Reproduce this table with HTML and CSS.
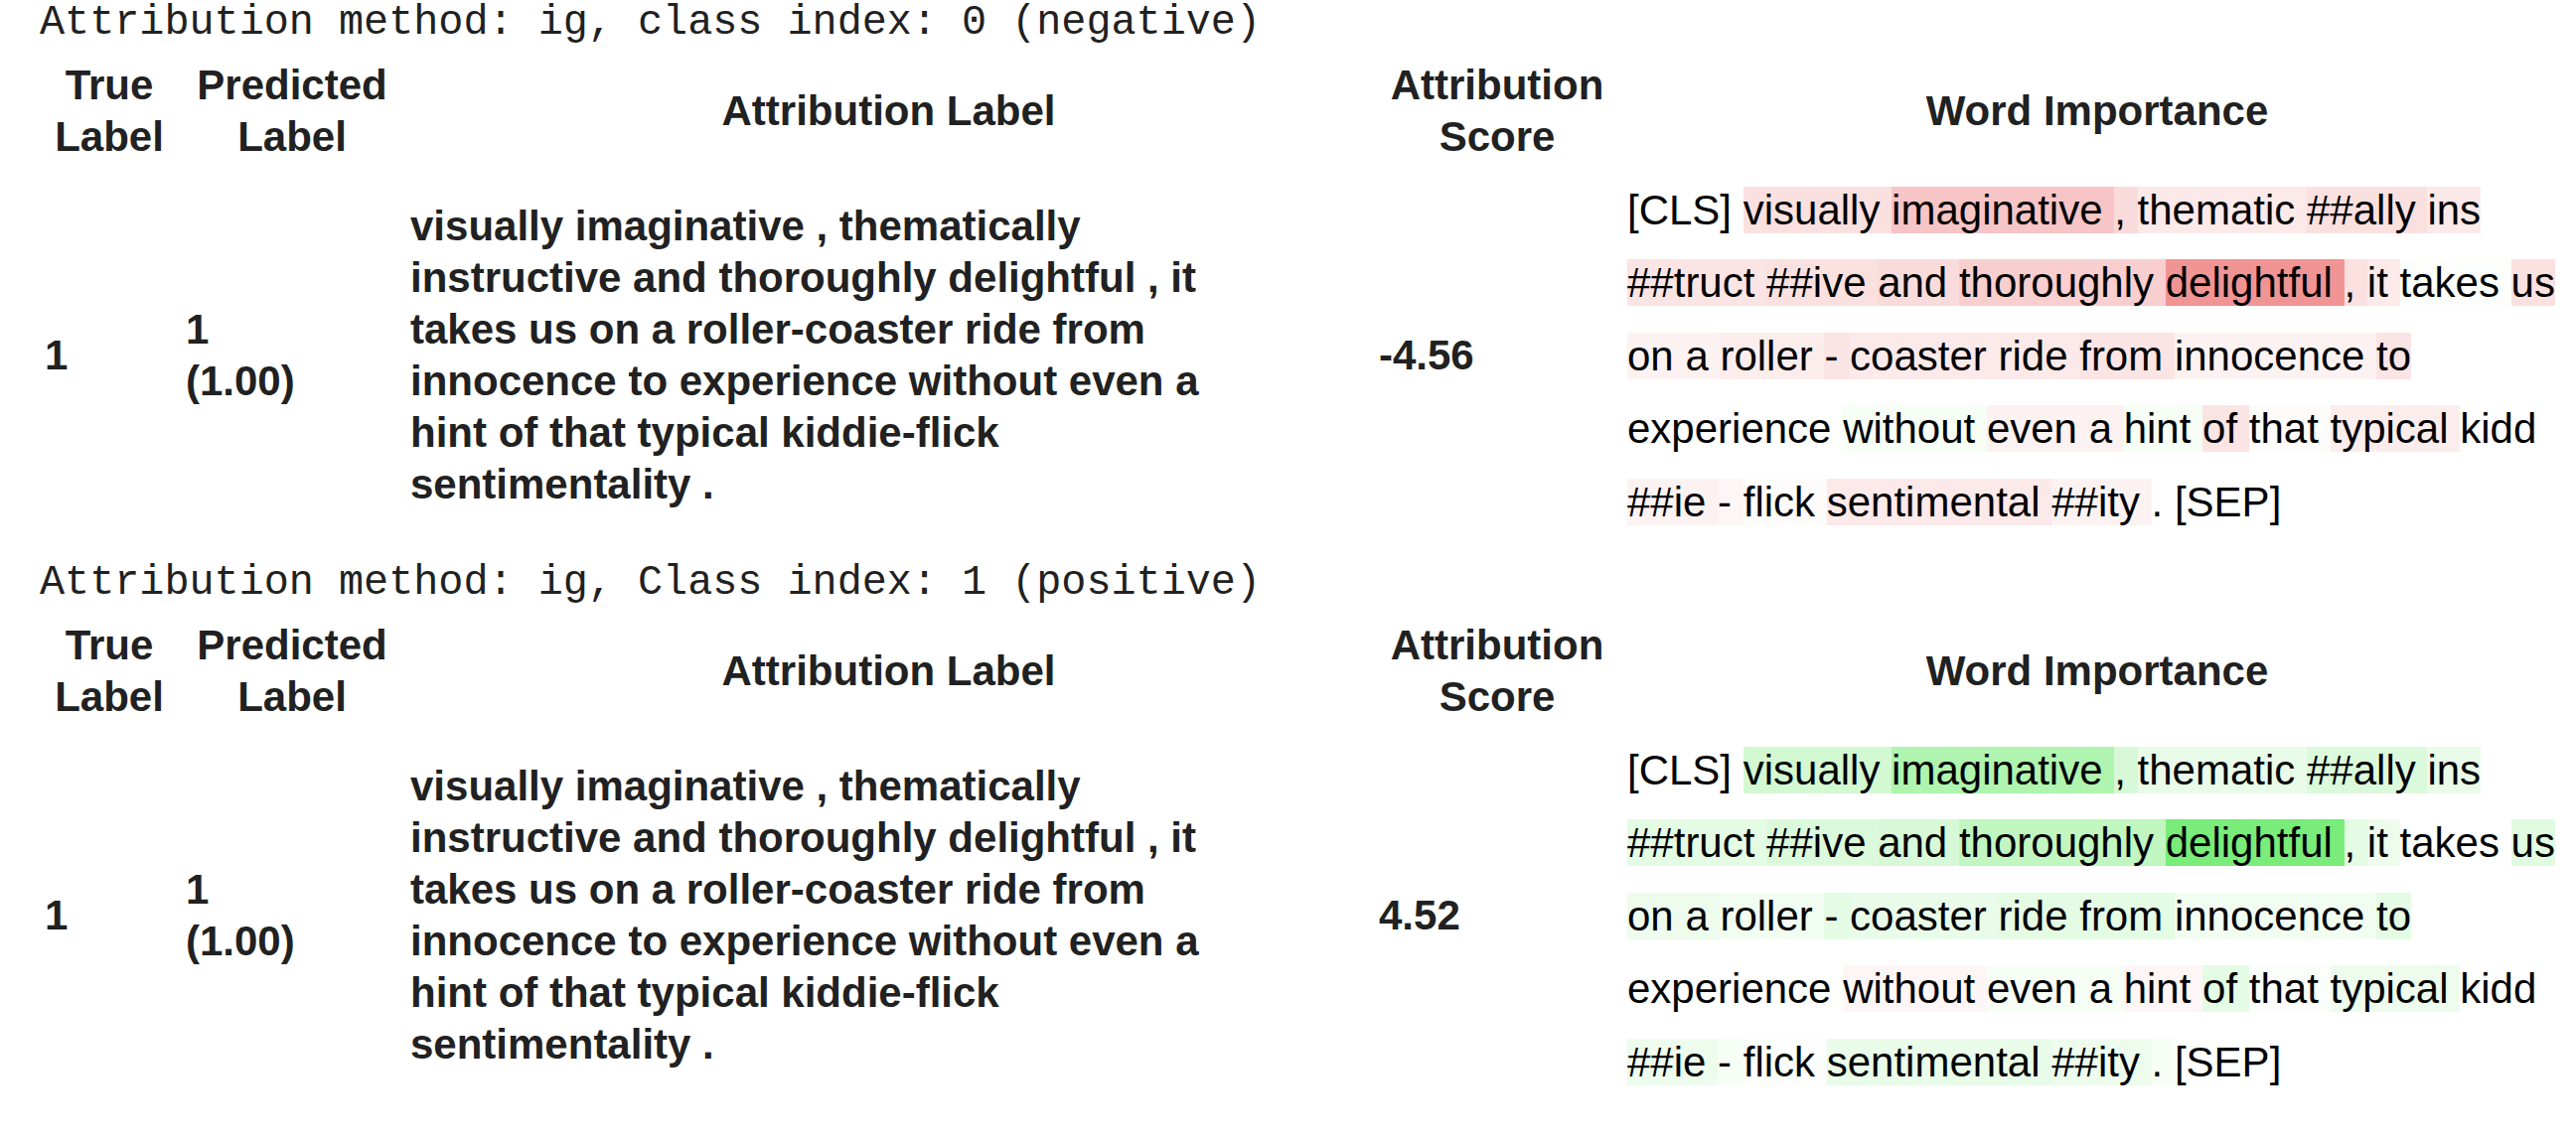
FILE: index.html
```html
<!DOCTYPE html>
<html>
<head>
<meta charset="utf-8">
<title>Attribution visualization</title>
<link rel="stylesheet" href="styles.css">
</head>
<body>
<div class="output">

<section class="block">
<pre class="method">Attribution method: ig, class index: 0 (negative)</pre>
<div class="attr-table">
  <div class="th">True Label</div>
  <div class="th">Predicted Label</div>
  <div class="th">Attribution Label</div>
  <div class="th">Attribution Score</div>
  <div class="th">Word Importance</div>

  <div class="td"><span class="cls">1</span></div>
  <div class="td"><span class="cls">1 (1.00)</span></div>
  <div class="td sentence">visually imaginative , thematically instructive and thoroughly delightful , it takes us on a roller-coaster ride from innocence to experience without even a hint of that typical kiddie-flick sentimentality .</div>
  <div class="td"><span class="cls">-4.56</span></div>
  <div class="words">
<mark class="tok">[CLS] </mark><mark class="tok" style="background-color:hsl(0,75%,93%)">visually </mark><mark class="tok" style="background-color:hsl(0,75%,87%)">imaginative </mark><mark class="tok" style="background-color:hsl(0,75%,92%)">, </mark><mark class="tok" style="background-color:hsl(0,75%,95%)">thematic </mark><mark class="tok" style="background-color:hsl(0,75%,93%)">##ally </mark><mark class="tok" style="background-color:hsl(0,75%,95%)">ins </mark><mark class="tok" style="background-color:hsl(0,75%,94%)">##truct </mark><mark class="tok" style="background-color:hsl(0,75%,93%)">##ive </mark><mark class="tok" style="background-color:hsl(0,75%,92%)">and </mark><mark class="tok" style="background-color:hsl(0,75%,89%)">thoroughly </mark><mark class="tok" style="background-color:hsl(0,75%,76%)">delightful </mark><mark class="tok" style="background-color:hsl(0,75%,93%)">, </mark><mark class="tok" style="background-color:hsl(0,75%,95%)">it </mark><mark class="tok" style="background-color:hsl(120,75%,99%)">takes </mark><mark class="tok" style="background-color:hsl(0,75%,93%)">us </mark><mark class="tok" style="background-color:hsl(0,75%,97%)">on </mark><mark class="tok" style="background-color:hsl(0,75%,97%)">a </mark><mark class="tok" style="background-color:hsl(0,75%,96%)">roller </mark><mark class="tok" style="background-color:hsl(0,75%,94%)">- </mark><mark class="tok" style="background-color:hsl(0,75%,95%)">coaster </mark><mark class="tok" style="background-color:hsl(0,75%,95%)">ride </mark><mark class="tok" style="background-color:hsl(0,75%,94%)">from </mark><mark class="tok" style="background-color:hsl(0,75%,97%)">innocence </mark><mark class="tok" style="background-color:hsl(0,75%,94%)">to </mark><mark class="tok">experience </mark><mark class="tok" style="background-color:hsl(120,75%,98%)">without </mark><mark class="tok" style="background-color:hsl(0,75%,97%)">even </mark><mark class="tok" style="background-color:hsl(0,75%,97%)">a </mark><mark class="tok" style="background-color:hsl(120,75%,98%)">hint </mark><mark class="tok" style="background-color:hsl(0,75%,94%)">of </mark><mark class="tok" style="background-color:hsl(0,75%,99%)">that </mark><mark class="tok" style="background-color:hsl(0,75%,96%)">typical </mark><mark class="tok">kidd </mark><mark class="tok" style="background-color:hsl(0,75%,97%)">##ie </mark><mark class="tok" style="background-color:hsl(0,75%,98%)">- </mark><mark class="tok" style="background-color:hsl(0,75%,99%)">flick </mark><mark class="tok" style="background-color:hsl(0,75%,95%)">sentimental </mark><mark class="tok" style="background-color:hsl(0,75%,97%)">##ity </mark><mark class="tok">. </mark><mark class="tok">[SEP] </mark>
  </div>
</div>
</section>

<section class="block">
<pre class="method">Attribution method: ig, Class index: 1 (positive)</pre>
<div class="attr-table">
  <div class="th">True Label</div>
  <div class="th">Predicted Label</div>
  <div class="th">Attribution Label</div>
  <div class="th">Attribution Score</div>
  <div class="th">Word Importance</div>

  <div class="td"><span class="cls">1</span></div>
  <div class="td"><span class="cls">1 (1.00)</span></div>
  <div class="td sentence">visually imaginative , thematically instructive and thoroughly delightful , it takes us on a roller-coaster ride from innocence to experience without even a hint of that typical kiddie-flick sentimentality .</div>
  <div class="td"><span class="cls">4.52</span></div>
  <div class="words">
<mark class="tok">[CLS] </mark><mark class="tok" style="background-color:hsl(120,75%,90%)">visually </mark><mark class="tok" style="background-color:hsl(120,75%,82%)">imaginative </mark><mark class="tok" style="background-color:hsl(120,75%,91%)">, </mark><mark class="tok" style="background-color:hsl(120,75%,95%)">thematic </mark><mark class="tok" style="background-color:hsl(120,75%,92%)">##ally </mark><mark class="tok" style="background-color:hsl(120,75%,95%)">ins </mark><mark class="tok" style="background-color:hsl(120,75%,94%)">##truct </mark><mark class="tok" style="background-color:hsl(120,75%,92%)">##ive </mark><mark class="tok" style="background-color:hsl(120,75%,91%)">and </mark><mark class="tok" style="background-color:hsl(120,75%,86%)">thoroughly </mark><mark class="tok" style="background-color:hsl(120,75%,70%)">delightful </mark><mark class="tok" style="background-color:hsl(120,75%,94%)">, </mark><mark class="tok" style="background-color:hsl(120,75%,96%)">it </mark><mark class="tok">takes </mark><mark class="tok" style="background-color:hsl(120,75%,93%)">us </mark><mark class="tok" style="background-color:hsl(120,75%,96%)">on </mark><mark class="tok" style="background-color:hsl(120,75%,96%)">a </mark><mark class="tok" style="background-color:hsl(120,75%,97%)">roller </mark><mark class="tok" style="background-color:hsl(120,75%,94%)">- </mark><mark class="tok" style="background-color:hsl(120,75%,95%)">coaster </mark><mark class="tok" style="background-color:hsl(120,75%,94%)">ride </mark><mark class="tok" style="background-color:hsl(120,75%,94%)">from </mark><mark class="tok" style="background-color:hsl(120,75%,97%)">innocence </mark><mark class="tok" style="background-color:hsl(120,75%,94%)">to </mark><mark class="tok">experience </mark><mark class="tok" style="background-color:hsl(0,75%,98%)">without </mark><mark class="tok" style="background-color:hsl(120,75%,98%)">even </mark><mark class="tok" style="background-color:hsl(120,75%,98%)">a </mark><mark class="tok" style="background-color:hsl(0,75%,98%)">hint </mark><mark class="tok" style="background-color:hsl(120,75%,94%)">of </mark><mark class="tok" style="background-color:hsl(120,75%,99%)">that </mark><mark class="tok" style="background-color:hsl(120,75%,96%)">typical </mark><mark class="tok">kidd </mark><mark class="tok" style="background-color:hsl(120,75%,96%)">##ie </mark><mark class="tok" style="background-color:hsl(120,75%,98%)">- </mark><mark class="tok" style="background-color:hsl(120,75%,99%)">flick </mark><mark class="tok" style="background-color:hsl(120,75%,95%)">sentimental </mark><mark class="tok" style="background-color:hsl(120,75%,96%)">##ity </mark><mark class="tok" style="background-color:hsl(120,75%,98%)">. </mark><mark class="tok">[SEP] </mark>
  </div>
</div>
</section>

</div>
</body>
</html>
```

FILE: styles.css
```css
html, body {
  margin: 0;
  padding: 0;
  background: #ffffff;
}

body {
  font-family: "Liberation Sans", Arial, sans-serif;
  font-size: 42px;
  color: #212121;
}

.output {
  padding: 0 8px 0 40px;
}

.block {
  padding-bottom: 22px;
}

.method {
  margin: 0;
  font-family: "Liberation Mono", "Courier New", monospace;
  font-size: 41.8px;
  line-height: 47.6px;
  white-space: pre;
  color: #212121;
}

.attr-table {
  display: grid;
  grid-template-columns: 130px 214px 963px 238px 946px;
  column-gap: 12px;
  row-gap: 11px;
  margin-left: 5px;
  padding-top: 12px;
  align-items: center;
  line-height: 52px;
}

.th {
  font-weight: bold;
  text-align: center;
}

.td {
  font-weight: bold;
  text-align: left;
}

.cls {
  padding-right: 2em;
}

.sentence {
  max-width: 860px;
}

.words {
  font-weight: normal;
  line-height: 1.75;
  color: #000000;
}

.tok {
  color: #000000;
  background-color: transparent;
  line-height: 1.75;
}
```
